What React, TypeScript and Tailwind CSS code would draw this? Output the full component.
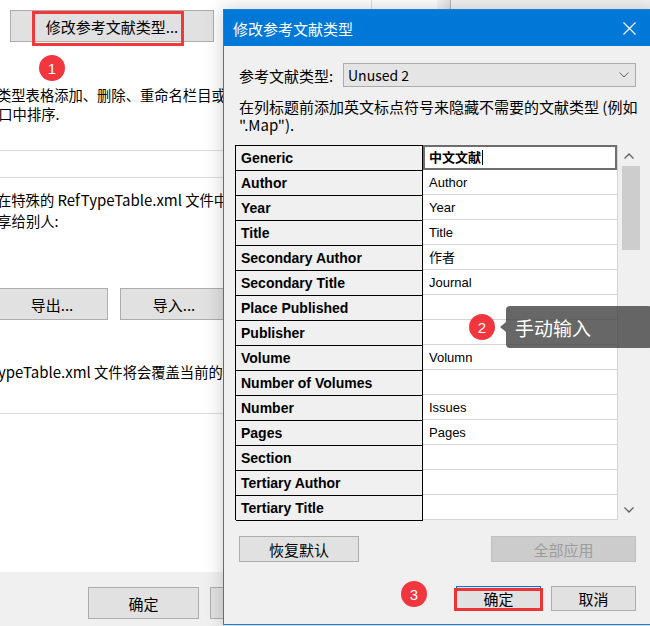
import React from "react";

const rows: [string, string][] = [
  ["Generic", "中文文献"],
  ["Author", "Author"],
  ["Year", "Year"],
  ["Title", "Title"],
  ["Secondary Author", "作者"],
  ["Secondary Title", "Journal"],
  ["Place Published", ""],
  ["Publisher", ""],
  ["Volume", "Volumn"],
  ["Number of Volumes", ""],
  ["Number", "Issues"],
  ["Pages", "Pages"],
  ["Section", ""],
  ["Tertiary Author", ""],
  ["Tertiary Title", ""],
];

function Badge({ n, className }: { n: string; className: string }) {
  return (
    <div
      className={
        "absolute w-[26px] h-[26px] rounded-full bg-[#f2363e] text-white flex items-center justify-center text-[15px] leading-none font-['Liberation_Sans',sans-serif] " +
        className
      }
    >
      {n}
    </div>
  );
}

export default function App() {
  return (
    <div className="relative w-[650px] h-[626px] overflow-hidden bg-white text-black font-['Noto_Sans_CJK_SC','Noto_Sans',sans-serif]">
      {/* Background preferences window */}
      <div className="flex flex-col w-[650px] h-[626px]">
        <div className="pl-[10px] pt-[10px]">
          <button className="w-[204px] h-[32px] bg-[#e1e1e1] border border-[#adadad] text-[15px] leading-none flex items-center justify-center">
            修改参考文献类型...
          </button>
        </div>
        <div className="mt-[43px] text-[14.3px] leading-[19px] whitespace-nowrap">
          <div className="ml-[-3px]">类型表格添加、删除、重命名栏目或在列表窗</div>
          <div className="ml-[-16px]">窗口中排序.</div>
        </div>
        <div className="mt-[27px] h-px bg-[#dadada]" />
        <div className="mt-[26px] h-px bg-[#dadada]" />
        <div className="mt-[11px] text-[14.3px] leading-[21px] whitespace-nowrap">
          <div className="ml-[-3px]">
            在特殊的 <span className="text-[15px]">RefTypeTable.xml</span> 文件中
          </div>
          <div className="ml-[-17px]">分享给别人:</div>
        </div>
        <div className="mt-[57px] flex gap-[12px] ml-[-4px]">
          <button className="w-[112px] h-[32px] bg-[#e1e1e1] border border-[#adadad] text-[15px] leading-none flex items-center justify-center">
            导出...
          </button>
          <button className="w-[108px] h-[32px] bg-[#e1e1e1] border border-[#adadad] text-[15px] leading-none flex items-center justify-center">
            导入...
          </button>
        </div>
        <div className="mt-[42px] text-[14.3px] leading-[20px] whitespace-nowrap ml-[-2px]">
          <span className="text-[15px]">ypeTable.xml</span> 文件将会覆盖当前的设置
        </div>
        <div className="mt-[31px] h-px bg-[#dadada]" />
        <div className="flex-1" />
        <div className="h-[54px] bg-[#f0f0f0] pt-[15px] pl-[88px] flex gap-[11px]">
          <button className="w-[111px] h-[32px] bg-[#e1e1e1] border border-[#adadad] text-[15px] leading-none flex items-center justify-center">
            确定
          </button>
          <button className="w-[111px] h-[32px] bg-[#e1e1e1] border border-[#adadad] text-[15px] leading-none flex items-center justify-center">
            取消
          </button>
        </div>
      </div>

      {/* Red highlight on first button */}
      <div className="absolute left-[32px] top-[11px] w-[152px] h-[35px] border-[3px] border-[#f03a3a]" />
      <Badge n="1" className="left-[39px] top-[55px]" />

      {/* window behind, top strip */}
      <div className="absolute left-[223px] top-0 w-[427px] h-[9px] flex">
        <div className="w-[148px] bg-white" />
        <div className="w-px bg-[#dcdcdc]" />
        <div className="w-[65px] bg-white" />
        <div className="w-[13px] bg-gradient-to-r from-[#f7f7f7] to-[#e3e3e3]" />
        <div className="w-px bg-[#b9b9b9]" />
        <div className="flex-1 bg-[#f2f2f2]" />
      </div>

      {/* Dialog */}
      <div className="absolute left-[223px] top-[9px] w-[432px] h-[616px] border border-[#1b7fd5] bg-[#f0f0f0] shadow-[0_0_18px_rgba(0,0,0,0.2)] flex flex-col">
        <div className="h-[36px] bg-[#0078d7] flex items-center justify-between pl-[9px] pr-[18px] text-white">
          <span className="text-[15px] leading-none">修改参考文献类型</span>
          <svg width="13" height="13" viewBox="0 0 13 13" fill="none" stroke="white" strokeWidth="1.2">
            <path d="M0.5 0.5 L12.5 12.5 M12.5 0.5 L0.5 12.5" />
          </svg>
        </div>

        <div className="pl-[15px] mt-[17px] h-[24px] flex items-center">
          <span className="w-[104px] text-[15px] leading-none whitespace-nowrap">参考文献类型:</span>
          <div className="w-[293px] h-[24px] bg-[#e5e5e5] border border-[#acacac] flex items-center justify-between pl-[4px] pr-[6px]">
            <span className="text-[14px] leading-none">Unused 2</span>
            <svg width="10" height="6" viewBox="0 0 10 6" fill="none" stroke="#5f5f5f" strokeWidth="1">
              <path d="M0.5 0.5 L5 5 L9.5 0.5" />
            </svg>
          </div>
        </div>

        <div className="pl-[15px] mt-[11px] text-[15px] leading-[18px] whitespace-nowrap">
          <div>在列标题前添加英文标点符号来隐藏不需要的文献类型 (例如</div>
          <div>".Map").</div>
        </div>

        {/* Table */}
        <div className="ml-[11px] mt-[11px] flex h-[375px]">
          <div className="w-[188px] flex flex-col border-t border-l border-black bg-[#f0f0f0]">
            {rows.map(([k]) => (
              <div
                key={k}
                className="h-[25px] shrink-0 border-b border-r border-black flex items-center pl-[5px] text-[14px] font-bold font-['Liberation_Sans','Noto_Sans_CJK_SC',sans-serif] whitespace-nowrap"
              >
                {k}
              </div>
            ))}
          </div>
          <div className="w-[195px] flex flex-col bg-white border-r border-[#d4d4d4]">
            {rows.map(([k, v], i) =>
              i === 0 ? (
                <div
                  key={k}
                  className="h-[25px] shrink-0 border-2 border-[#6e6e6e] bg-white flex items-center pl-[4px] text-[13px] font-bold font-['Liberation_Sans','Noto_Sans_CJK_SC',sans-serif]"
                >
                  {v}
                  <span className="w-px h-[15px] bg-black ml-px" />
                </div>
              ) : (
                <div
                  key={k}
                  className="h-[25px] shrink-0 border-b border-[#d4d4d4] flex items-center pl-[6px] pt-px text-[13px] font-['Liberation_Sans','Noto_Sans_CJK_SC',sans-serif] whitespace-nowrap"
                >
                  {v}
                </div>
              )
            )}
          </div>
          {/* scrollbar */}
          <div className="w-[22px] flex flex-col items-center">
            <div className="h-[21px] w-full flex items-center justify-center">
              <svg width="10" height="6" viewBox="0 0 10 6" fill="none" stroke="#606060" strokeWidth="1.3">
                <path d="M0.5 5.5 L5 1 L9.5 5.5" />
              </svg>
            </div>
            <div className="w-[18px] h-[84px] bg-[#cdcdcd] ml-[3px]" />
            <div className="flex-1" />
            <div className="h-[21px] w-full flex items-center justify-center">
              <svg width="10" height="6" viewBox="0 0 10 6" fill="none" stroke="#606060" strokeWidth="1.3">
                <path d="M0.5 0.5 L5 5 L9.5 0.5" />
              </svg>
            </div>
          </div>
        </div>

        <div className="pl-[15px] mt-[16px] flex">
          <button className="w-[120px] h-[26px] bg-[#e1e1e1] border border-[#adadad] text-[15px] leading-none flex items-center justify-center">
            恢复默认
          </button>
          <button className="ml-[132px] w-[145px] h-[26px] bg-[#cccccc] border border-[#bfbfbf] text-[#9c9c9c] text-[15px] leading-none flex items-center justify-center">
            全部应用
          </button>
        </div>

        <div className="pl-[232px] mt-[24px] flex gap-[10px]">
          <div className="relative">
            <button className="w-[85px] h-[25px] bg-[#e1e1e1] border border-[#0078d7] text-[15px] leading-none flex items-center justify-center">
              确定
            </button>
            <div className="absolute left-[-2px] top-[2px] w-[89px] h-[23px] border-[3px] border-[#ee3535]" />
          </div>
          <button className="w-[85px] h-[25px] bg-[#e1e1e1] border border-[#adadad] text-[15px] leading-none flex items-center justify-center">
            取消
          </button>
        </div>
      </div>

      {/* Annotations */}
      <Badge n="2" className="left-[469px] top-[314px]" />
      <div className="absolute left-[506px] top-[306px] w-[146px] h-[42px] rounded-[4px] bg-[rgba(70,70,70,0.82)] flex items-center pl-[9px]">
        <div className="absolute left-[-6px] top-[16px] w-0 h-0 border-y-[5px] border-y-transparent border-r-[6px] border-r-[rgba(70,70,70,0.82)]" />
        <span className="text-white text-[19px] leading-none">手动输入</span>
      </div>
      <Badge n="3" className="left-[401px] top-[581px]" />
    </div>
  );
}
